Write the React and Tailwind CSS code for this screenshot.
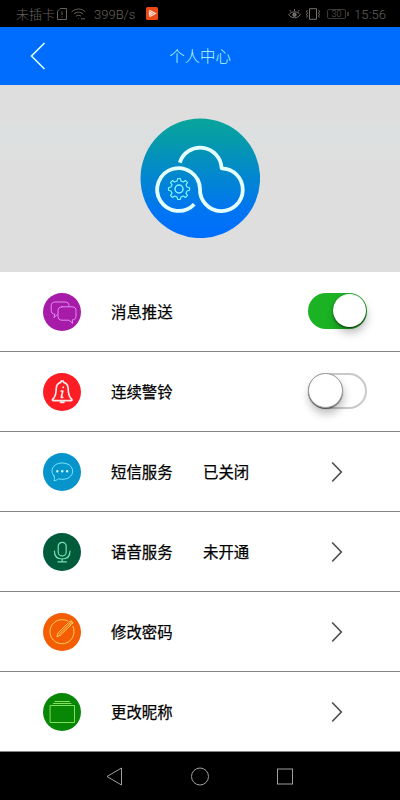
import React, { useState } from 'react';
import clsx from 'clsx';

const CloudLogo = () => (
    <svg viewBox="0 0 120 120" className="size-[120px]" fill="none" stroke="#e4ffff" strokeLinecap="round">
        <defs>
            <linearGradient id="sky" x1="0" y1="0" x2="0" y2="1">
                <stop offset="0" stopColor="#08a59b" />
                <stop offset="0.2" stopColor="#0599ad" />
                <stop offset="0.75" stopColor="#0076f0" />
                <stop offset="1" stopColor="#006dff" />
            </linearGradient>
        </defs>
        <circle cx="60.3" cy="60.3" r="59.8" fill="url(#sky)" stroke="none" />
        <path
            d="M54.2 86.2A21.4 21.4 0 1 1 60 71A21.4 21.4 0 1 0 81.6 50.3A21.4 21.4 0 0 0 39.8 44.6"
            strokeWidth="3.8"
            strokeLinecap="butt"
            strokeLinejoin="round"
        />
        <g stroke="#83f3ff" strokeWidth="1.2">
            <circle cx="39" cy="71" r="4" strokeWidth="1.5" />
            <path
                transform="translate(39 71)"
                strokeLinejoin="round"
                d="M-2-8L-1.2-10.5H1.2L2-8L4.3-7L6.4-8.5L8.5-6.4L7-4.3L8-2L10.5-1.2V1.2L8 2L7 4.3L8.5 6.4L6.4 8.5L4.3 7L2 8L1.2 10.5H-1.2L-2 8L-4.3 7L-6.4 8.5L-8.5 6.4L-7 4.3L-8 2L-10.5 1.2V-1.2L-8-2L-7-4.3L-8.5-6.4L-6.4-8.5L-4.3-7Z"
            />
        </g>
    </svg>
);

const ICONS = {
    push: (
        <g stroke="#e38cf0" strokeWidth="1">
            <path d="M14 21.7L11 24.7L11.8 21.2C9.2 21 8.2 19.8 8.2 17.5V13C8.2 10.3 9.5 9 12.2 9H22C24.8 9 26 10.2 26 13" />
            <path d="M19 13.8H29C31.7 13.8 33 15.2 33 17.8V23C33 25.7 31.7 26.9 29.2 26.9L29.7 30.3L25.8 27.2H19C16.3 27.2 15 25.8 15 23V17.8C15 15.2 16.3 13.8 19 13.8Z" />
        </g>
    ),
    bell: (
        <g stroke="#ffeaea" strokeWidth="1.7">
            <path d="M17.7 9.4C17.7 7.4 20.7 7.4 20.7 9.4C23.8 10.4 25.2 13 25.2 16C25.2 20.5 25.7 23.5 28.6 26.2C29.4 27 29 27.6 28 27.6H10.4C9.4 27.6 9 27 9.8 26.2C12.7 23.5 13.2 20.5 13.2 16C13.2 13 14.6 10.4 17.7 9.4Z" />
            <path d="M17.6 29.2H20.8" strokeWidth="2" />
            <path d="M18.2 18H19.8L18.3 24.3H19.8M20.2 14.2V14.4" />
        </g>
    ),
    sms: (
        <g stroke="#7be8ff" strokeWidth="1">
            <path d="M11 22.8C9.7 21.5 9 20 9 18.2C9 13.3 13.5 10 19.2 10C25 10 29.6 13.3 29.6 18.2C29.6 23.2 25 26.3 19.2 26.3C17.8 26.3 16.6 26.1 15.4 25.8C14 27 12.7 27.6 11 27.9C11.6 26.3 11.7 24.7 11 22.8Z" />
            <path d="M14.3 18.3H14.4M19.2 18.3H19.3M24.1 18.3H24.2" stroke="#c9f7ff" strokeWidth="2.4" />
        </g>
    ),
    mic: (
        <g stroke="#78e3b4" strokeWidth="1.2">
            <rect x="15.2" y="9.3" width="8" height="13.6" rx="4" />
            <path d="M11.4 18.2C11.4 23 14.3 26 19.2 26C24.1 26 27 23 27 18.2M19.2 26V28.7M15 28.9H23.4" />
        </g>
    ),
    edit: (
        <g stroke="#ffd05c" strokeWidth="1">
            <path d="M24.8 8A12.1 12.1 0 1 0 29.9 13.3" />
            <path d="M14 23.3L15.1 19.8L25.6 9.6L28 11.9L17.4 22.2ZM16.4 21L26.6 11" />
            <path d="M26.8 8.6L27.8 7.6L30.2 9.8L29.2 10.9Z" fill="#ffd05c" fillOpacity="0.5" />
        </g>
    ),
    folder: (
        <g stroke="#83e05b" strokeWidth="1">
            <path d="M7.5 12.5H31.5V29.5H7.5ZM10.5 10.5H28M12 8.5H26.5" />
        </g>
    ),
};

const Toggle = ({ on, onClick }) => (
    <button
        onClick={onClick}
        className={clsx(
            'flex items-center h-9 w-[59px] rounded-full mr-[33px] -mt-[2px]',
            on ? 'justify-end bg-[#1bb324]' : 'justify-start bg-white border-2 border-[#c9c9c9]'
        )}
    >
        <span
            className={clsx(
                'rounded-full bg-white shrink-0',
                on
                    ? 'size-[33px] mr-px -mt-px shadow-[0_1px_2px_rgba(0,0,0,0.65),1px_6px_9px_rgba(0,0,0,0.25)]'
                    : 'size-[35px] -ml-[2px] -mt-px border border-[#999] shadow-[0_1px_1px_rgba(0,0,0,0.5),1px_6px_9px_rgba(0,0,0,0.25)]'
            )}
        />
    </button>
);

const Row = ({ icon, color, label, value, children }) => (
    <div className="h-20 shrink-0 flex items-center border-b border-[#858585] pl-[43px] bg-white">
        <svg viewBox="0 0 38 38" className={clsx('size-[38px] rounded-full shrink-0', color)} fill="none" strokeLinecap="round" strokeLinejoin="round">
            {ICONS[icon]}
        </svg>
        <span className="ml-[30px] w-[92px] text-[15.4px] [-webkit-text-stroke:0.25px_black]">{label}</span>
        <span className="flex-1 text-[15.4px] [-webkit-text-stroke:0.25px_black]">{value}</span>
        {children || (
            <svg viewBox="0 0 12 22" className="w-3 h-[22px] mr-[57px]" fill="none" stroke="#4d4d4d" strokeWidth="1.6">
                <path d="M1.2 1.5L10.3 11L1.2 20.5" />
            </svg>
        )}
    </div>
);

const StatusBar = () => (
    <div className="h-[27px] shrink-0 bg-black flex items-center pl-4 pr-[13px] text-[#65605d] text-[12.5px] font-light">
        <span className="text-[13px]">未插卡</span>
        <svg viewBox="0 0 10 12" className="w-[10px] h-3 ml-[2px]" fill="none" stroke="#65605d">
            <path d="M3.2.5H9.5V11.5H.5V3.2ZM5 3.5V7M5 8.5V9.5" />
        </svg>
        <svg viewBox="0 0 15 12" className="w-[15px] h-3 ml-1" fill="none" stroke="#65605d">
            <path d="M.7 3.8C4.5.1 10.5.1 14.3 3.8M2.8 6.1C5.4 3.6 9.6 3.6 12.2 6.1M4.9 8.3C6.3 6.9 8.7 6.9 10.1 8.3M7.2 10.5H7.8M10 10.8H14" />
        </svg>
        <span className="ml-2 w-[43px] mt-[2px] whitespace-nowrap font-[Roboto] text-[13px]">399B/s</span>
        <svg viewBox="0 0 12 13" className="w-3 h-[13px] ml-[9px]">
            <rect width="12" height="13" rx="1.5" fill="#ed4a18" />
            <path d="M3.5 3.2L9.3 6.5L3.5 9.8M3.5 5V8L6 6.5Z" fill="none" stroke="#ffe9dc" strokeWidth="1.2" />
        </svg>
        <svg viewBox="0 0 13 12" className="w-[13px] h-3 ml-auto" fill="none" stroke="#77716d">
            <path d="M.7 6.7C3.6 2.9 9.4 2.9 12.3 6.7C9.4 10.8 3.6 10.8.7 6.7ZM3 3.7L1.7 2M6.5 3V1M10 3.7L11.3 2" />
            <circle cx="6.5" cy="6.7" r="1.7" fill="#77716d" />
        </svg>
        <svg viewBox="0 0 16 12" className="w-4 h-3 ml-[4px]" fill="none" stroke="#77716d">
            <path d="M4.5.7H11.5V11.3H4.5ZM2.5 2L1.5 3.5L2.5 5L1.5 6.5L2.5 8L1.5 9.5M13.5 2L14.5 3.5L13.5 5L14.5 6.5L13.5 8L14.5 9.5" />
        </svg>
        <span className="ml-[6px] w-[19px] h-[10px] rounded-[2px] border border-[#3b3835] text-[9px] leading-[8px] text-center font-[Roboto]">30</span>
        <span className="w-[2px] h-1 bg-[#3b3835] ml-px" />
        <span className="ml-[5px] w-[33px] mt-[2px] whitespace-nowrap font-[Roboto] text-[13.2px]">15:56</span>
    </div>
);

const App = () => {
    const [push, setPush] = useState(true);
    const [alarm, setAlarm] = useState(false);

    return (
        <div className="w-[400px] h-[800px] overflow-hidden flex flex-col bg-white text-black font-['Noto_Sans_CJK_SC',sans-serif]">
            <StatusBar />
            <header className="h-[58px] shrink-0 bg-[#006dff] grid grid-cols-3 items-center">
                <svg viewBox="0 0 16 28" className="w-4 h-7 ml-[30px] -mt-px" fill="none" stroke="#dcffff" strokeWidth="1.6">
                    <path d="M14.5 1L1.5 14L14.5 27" />
                </svg>
                <h1 className="text-center text-[15.4px] font-light text-[#b8ffff]">个人中心</h1>
            </header>

            <div className="h-[187px] shrink-0 flex justify-center pt-[33px] bg-linear-to-b from-[#dedede] from-20% via-[#dce0e0] via-25% to-[#dedede] to-40%">
                <CloudLogo />
            </div>

            <main className="flex flex-col">
                <Row icon="push" color="bg-[#a61ba8]" label="消息推送">
                    <Toggle on={push} onClick={() => setPush(!push)} />
                </Row>
                <Row icon="bell" color="bg-[#fc1d25]" label="连续警铃">
                    <Toggle on={alarm} onClick={() => setAlarm(!alarm)} />
                </Row>
                <Row icon="sms" color="bg-[#0794cb]" label="短信服务" value="已关闭" />
                <Row icon="mic" color="bg-[#005b3c]" label="语音服务" value="未开通" />
                <Row icon="edit" color="bg-[#f55d05]" label="修改密码" />
                <Row icon="folder" color="bg-[#088706]" label="更改昵称" />
            </main>

            <nav className="flex-1 bg-black flex items-center pl-[105px]">
                <svg viewBox="0 0 190 20" className="w-[190px] h-5" fill="none" stroke="#a0a0a0">
                    <path d="M2 10.5L16.5 2V19Z" />
                    <circle cx="95" cy="10.5" r="8.5" />
                    <rect x="172.5" y="3" width="15" height="15" />
                </svg>
            </nav>
        </div>
    );
};

export default App;
